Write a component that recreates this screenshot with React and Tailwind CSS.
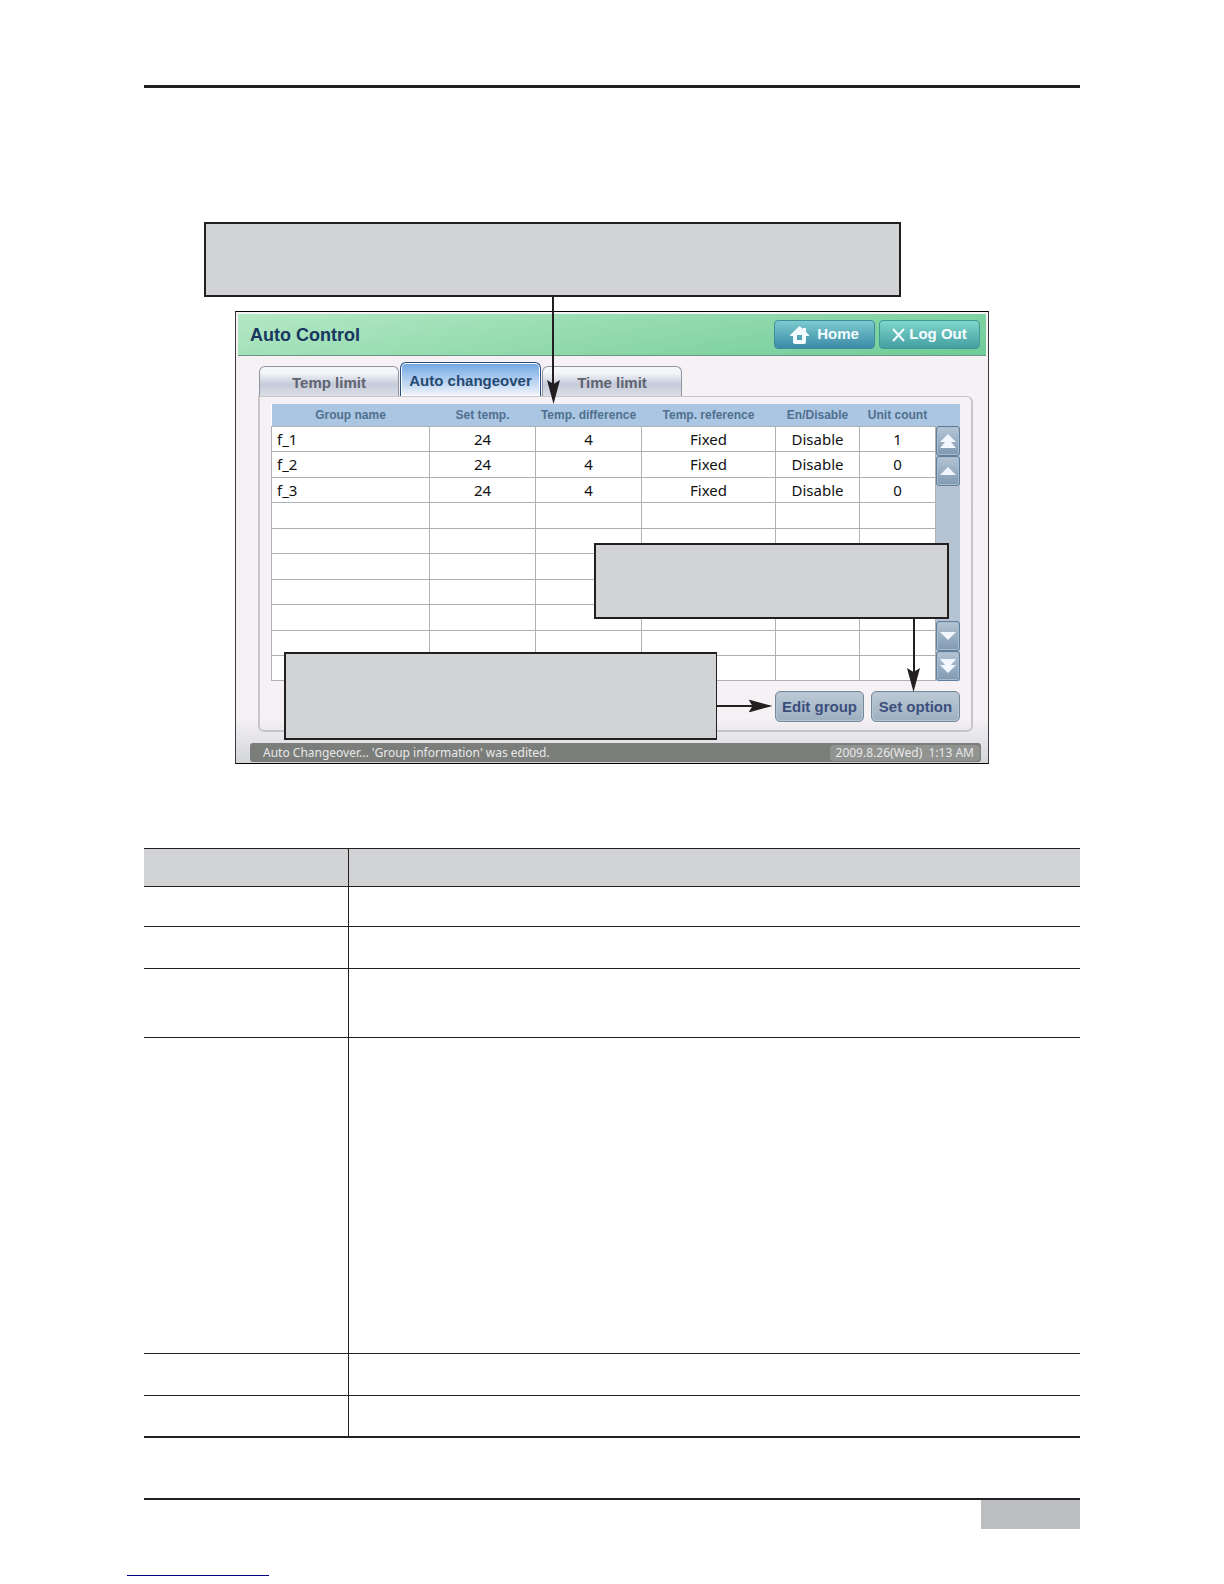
import React from "react";
import { useState } from "react";

const columns = [
  { label: "Group name", width: "" },
  { label: "Set temp.", width: "w-[106px]" },
  { label: "Temp. difference", width: "w-[106px]" },
  { label: "Temp. reference", width: "w-[134px]" },
  { label: "En/Disable", width: "w-[84px]" },
  { label: "Unit count", width: "w-[76px]" },
];

const groups = [
  ["f_1", "24", "4", "Fixed", "Disable", "1"],
  ["f_2", "24", "4", "Fixed", "Disable", "0"],
  ["f_3", "24", "4", "Fixed", "Disable", "0"],
];

const emptyRow = ["", "", "", "", "", ""];
const rows = [...groups, ...Array(7).fill(emptyRow)];

const tabs = ["Temp limit", "Auto changeover", "Time limit"];

const infoRows = [
  "h-[38px] bg-[#d2d3d5]",
  "h-[40px]",
  "h-[42px]",
  "h-[69px]",
  "h-[316px]",
  "h-[42px]",
  "h-[41px]",
];

const HomeIcon = () => (
  <svg width="19" height="18" viewBox="0 0 19 18" aria-hidden="true">
    <path
      fill="#f4fcff"
      fillRule="evenodd"
      d="M9.5 0 13 3V2h3v4l3 3v1h-3v6q0 2-2 2H5q-2 0-2-2v-6H0V9zM7 9v5h5V9z"
    />
  </svg>
);

const CloseIcon = () => (
  <svg width="13" height="14" viewBox="0 0 13 14" aria-hidden="true">
    <path d="M1 1 12 13M12 1 1 13" stroke="#f4fcff" strokeWidth="2" fill="none" />
  </svg>
);

const ScrollButton = ({ label, double, down }) => (
  <button
    type="button"
    aria-label={label}
    className="flex h-[30px] w-full items-center justify-center rounded-[3px] border border-[#5f7f9c] bg-linear-to-b from-[#b4c4d4] to-[#8199b1] shadow-[inset_0_0_0_1px_#a9bccd]"
  >
    <svg
      width="16"
      height="15"
      viewBox="0 0 16 15"
      aria-hidden="true"
      className={down ? "rotate-180" : ""}
    >
      {double ? (
        <path d="M8 0 16 8H11L16 14H0L5 8H0z" fill="#f1f6ff" />
      ) : (
        <path d="M8 3 16 11H0z" fill="#f1f6ff" />
      )}
    </svg>
  </button>
);

const ArrowHead = ({ className }) => (
  <svg
    width="13"
    height="24"
    viewBox="0 0 13 24"
    aria-hidden="true"
    className={className}
  >
    <path d="M0 0 6.5 4 13 0 6.5 24z" fill="#231f20" />
  </svg>
);

const ActionButton = ({ children }) => (
  <button
    type="button"
    className="h-[31px] w-[89px] rounded-[5px] border border-[#75879a] bg-linear-to-b from-[#bccad5] to-[#9dafc0] text-[15px] leading-none font-bold whitespace-nowrap text-[#3c4f7c] shadow-[inset_0_0_0_1px_#b4c4d1]"
  >
    {children}
  </button>
);

const GroupTable = () => (
  <div className="flex">
    <table className="flex-1 table-fixed border-collapse bg-white">
      <thead>
        <tr className="h-[22px] bg-[#aac6e2] text-[12px] leading-4 text-[#50708f]">
          {columns.map((column) => (
            <th key={column.label} className={`p-0 whitespace-nowrap ${column.width}`}>
              {column.label}
            </th>
          ))}
        </tr>
      </thead>
      <tbody className="font-['Noto_Sans','DejaVu_Sans',sans-serif] text-[15px] leading-5 text-[#111111]">
        {rows.map((row, index) => (
          <tr key={index} className="h-[25px] even:not-last:h-[26px]">
            {row.map((cell, i) => (
              <td
                key={i}
                className="border border-[#aeb1b3] p-0 text-center first:pl-[5px] first:text-left"
              >
                {cell}
              </td>
            ))}
          </tr>
        ))}
      </tbody>
    </table>
    <div className="flex w-6 flex-col bg-[#b5c3d2]">
      <div className="h-[22px] rounded-tr-sm bg-[#aac6e2]" />
      <ScrollButton label="Scroll to top" double />
      <ScrollButton label="Scroll up" />
      <div className="flex-1" />
      <ScrollButton label="Scroll down" down />
      <ScrollButton label="Scroll to bottom" double down />
    </div>
  </div>
);

const Controller = () => {
  const [active, setActive] = useState("Auto changeover");

  return (
    <div className="flex h-[453px] flex-col border border-[#3a3a3a] border-t-black border-b-black bg-linear-to-b from-[#f5f1f5] from-90% to-[#d4d6da] p-[2px] pb-px">
      <header className="flex h-[42px] items-center gap-1 border-b border-[#6d9482] bg-linear-170 from-[#b3e8c4] to-[#6ecb98] pr-[6px] pl-3">
        <h1 className="flex-1 text-lg leading-6 font-bold text-[#173660]">Auto Control</h1>
        <button
          type="button"
          className="flex h-[29px] w-[101px] items-center justify-center gap-2 rounded-sm border border-[#3c8f9a] bg-linear-to-b from-[#7ccbce] to-[#3b8ba8] text-[15px] font-bold text-[#f4fcff]"
        >
          <HomeIcon />
          Home
        </button>
        <button
          type="button"
          className="flex h-[29px] w-[101px] items-center justify-center gap-1 rounded-sm border border-[#3d9d95] bg-linear-to-b from-[#80d6cb] to-[#439fa2] text-[15px] font-bold whitespace-nowrap text-[#f4fcff]"
        >
          <CloseIcon />
          Log Out
        </button>
      </header>

      <div className="mr-[13px] ml-5 flex flex-1 flex-col pt-[6px]">
        <div className="flex h-[34px] items-end gap-px pl-px">
          {tabs.map((tab) => (
            <button
              type="button"
              key={tab}
              onClick={() => setActive(tab)}
              className={
                tab === active
                  ? "h-[34px] w-[141px] rounded-t-md border border-b-0 border-[#274d80] bg-linear-to-b from-[#6fa6e2] to-[#f3f5fa] pt-1 text-[15px] font-bold whitespace-nowrap text-[#254a72] shadow-[inset_0_0_0_1px_#ffffff]"
                  : "h-[30px] w-[140px] rounded-t-md border border-b-0 border-[#8f949f] bg-linear-to-b from-[#f4f5f9] from-20% via-[#c5cbda] via-60% to-[#dcdfe6] pt-1 text-[15px] font-bold whitespace-nowrap text-[#5f6470]"
              }
            >
              {tab}
            </button>
          ))}
        </div>
        <main className="flex-1 rounded-md rounded-tl-none border-2 border-t border-[#c6c5ca] px-[11px] pt-[7px]">
          <GroupTable />
          <div className="flex justify-end gap-[7px] pt-[10px]">
            <ActionButton>Edit group</ActionButton>
            <ActionButton>Set option</ActionButton>
          </div>
        </main>
      </div>

      <footer className="mt-[11px] mr-[5px] ml-3 flex h-[19px] items-center justify-between rounded-[3px] bg-[#7b7d7b] pr-px pl-[13px] font-['Noto_Sans','DejaVu_Sans',sans-serif] text-[12px] leading-4 whitespace-pre text-[#e8e8e8]">
        <span>Auto Changeover... 'Group information' was edited.</span>
        <span className="rounded-sm bg-[#919391] px-[6px]">2009.8.26(Wed)  1:13 AM</span>
      </footer>
    </div>
  );
};

const App = () => {
  return (
    <div className="min-h-screen bg-white px-36 pt-[85px] font-['Liberation_Sans',Arial,sans-serif]">
      <div className="h-[3px] bg-[#231f20]" />

      <section className="relative mt-[134px]">
        <div className="mr-[179px] ml-[60px] h-[75px] border-2 border-[#231f20] bg-[#d2d3d5]" />
        <div className="mx-[91px] mt-[14px]">
          <Controller />
        </div>

        {/* leader from the top note to the table header */}
        <div className="absolute top-[75px] left-[408px] h-[90px] w-[2px] bg-[#231f20]" />
        <ArrowHead className="absolute top-[158px] left-[403px]" />

        {/* note for Set option */}
        <div className="absolute top-[321px] right-[131px] h-[76px] w-[355px] border-2 border-[#231f20] bg-[#d2d3d5]" />
        <div className="absolute top-[397px] right-[165px] h-[55px] w-[2px] bg-[#231f20]" />
        <ArrowHead className="absolute top-[446px] right-[160px]" />

        {/* note for Edit group */}
        <div className="absolute top-[430px] right-[363px] left-[140px] h-[88px] border-2 border-r border-[#231f20] bg-[#d2d3d5]" />
        <div className="absolute top-[483px] right-[325px] h-[2px] w-[38px] bg-[#231f20]" />
        <ArrowHead className="absolute top-[472px] right-[313px] -rotate-90" />
      </section>

      <table className="mt-[84px] w-full table-fixed border-collapse border-t border-b-2 border-[#231f20]">
        <tbody>
          {infoRows.map((row, index) => (
            <tr key={index} className={row}>
              <td className="w-[204px] border-r border-b border-[#231f20] p-0" />
              <td className="border-b border-[#231f20] p-0" />
            </tr>
          ))}
        </tbody>
      </table>

      <div className="mt-[60px] h-[2px] bg-[#231f20]" />
      <div className="ml-auto h-[29px] w-[99px] bg-[#bbbdc0]" />
      <a
        href="#top"
        aria-label="Back to top"
        className="mt-[46px] -ml-[17px] block w-[142px] border-b border-[#00007c]"
      />
    </div>
  );
};

export default App;
